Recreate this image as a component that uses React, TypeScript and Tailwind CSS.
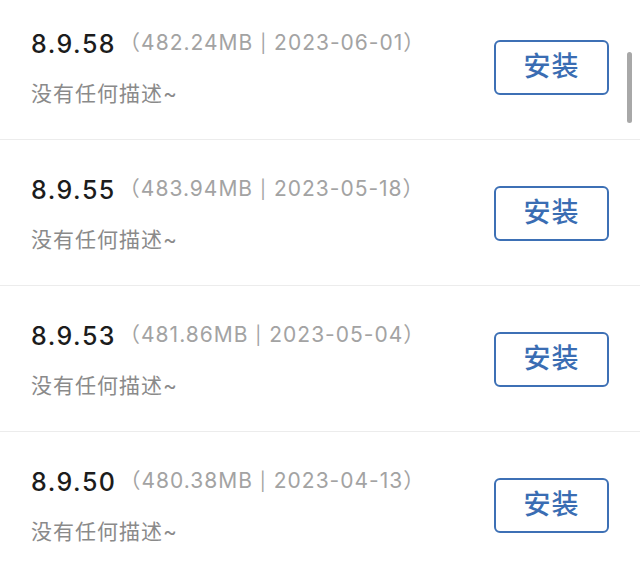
const versions = [
  { version: '8.9.58', size: '482.24MB', date: '2023-06-01' },
  { version: '8.9.55', size: '483.94MB', date: '2023-05-18' },
  { version: '8.9.53', size: '481.86MB', date: '2023-05-04' },
  { version: '8.9.50', size: '480.38MB', date: '2023-04-13' },
];

const font = "font-['Inter','Noto_Sans_CJK_SC',sans-serif]";

function VersionRow({ version, size, date }: { version: string; size: string; date: string }) {
  return (
    <li className="h-[146px] border-b border-[#ececec] flex items-center justify-between pl-[31px] pr-[31px]">
      <div className="flex flex-col pt-[3px]">
        <div className="flex items-center h-[34px]">
          <span className="text-[25px] leading-[34px] font-medium text-[#1c1c1c] tracking-[1.5px]">{version}</span>
          <span className="text-[21px] leading-[34px] text-[#a3a3a3] tracking-[1px] ml-[3px]">
            （{size} <span className="text-[18px]">|</span> {date}）
          </span>
        </div>
        <div className="mt-[17px] h-[32px] text-[21px] leading-[32px] text-[#8a8a8a] tracking-[1px]">
          没有任何描述~
        </div>
      </div>
      <button className="w-[115px] h-[55px] mt-[2px] rounded-[6px] border-2 border-[#3d70b5] text-[#3a6db3] text-[27px] font-medium tracking-[1px] flex items-center justify-center">
        安装
      </button>
    </li>
  );
}

export default function App() {
  return (
    <div className={`relative w-[640px] h-[577px] overflow-hidden bg-white ${font}`}>
      <ul className="-mt-[6px]">
        {versions.map((v) => (
          <VersionRow key={v.version} {...v} />
        ))}
      </ul>
      {/* scroll indicator */}
      <div className="absolute left-[627px] top-[52px] w-[5px] h-[71px] rounded-full bg-[#a8a8a8]" />
    </div>
  );
}
